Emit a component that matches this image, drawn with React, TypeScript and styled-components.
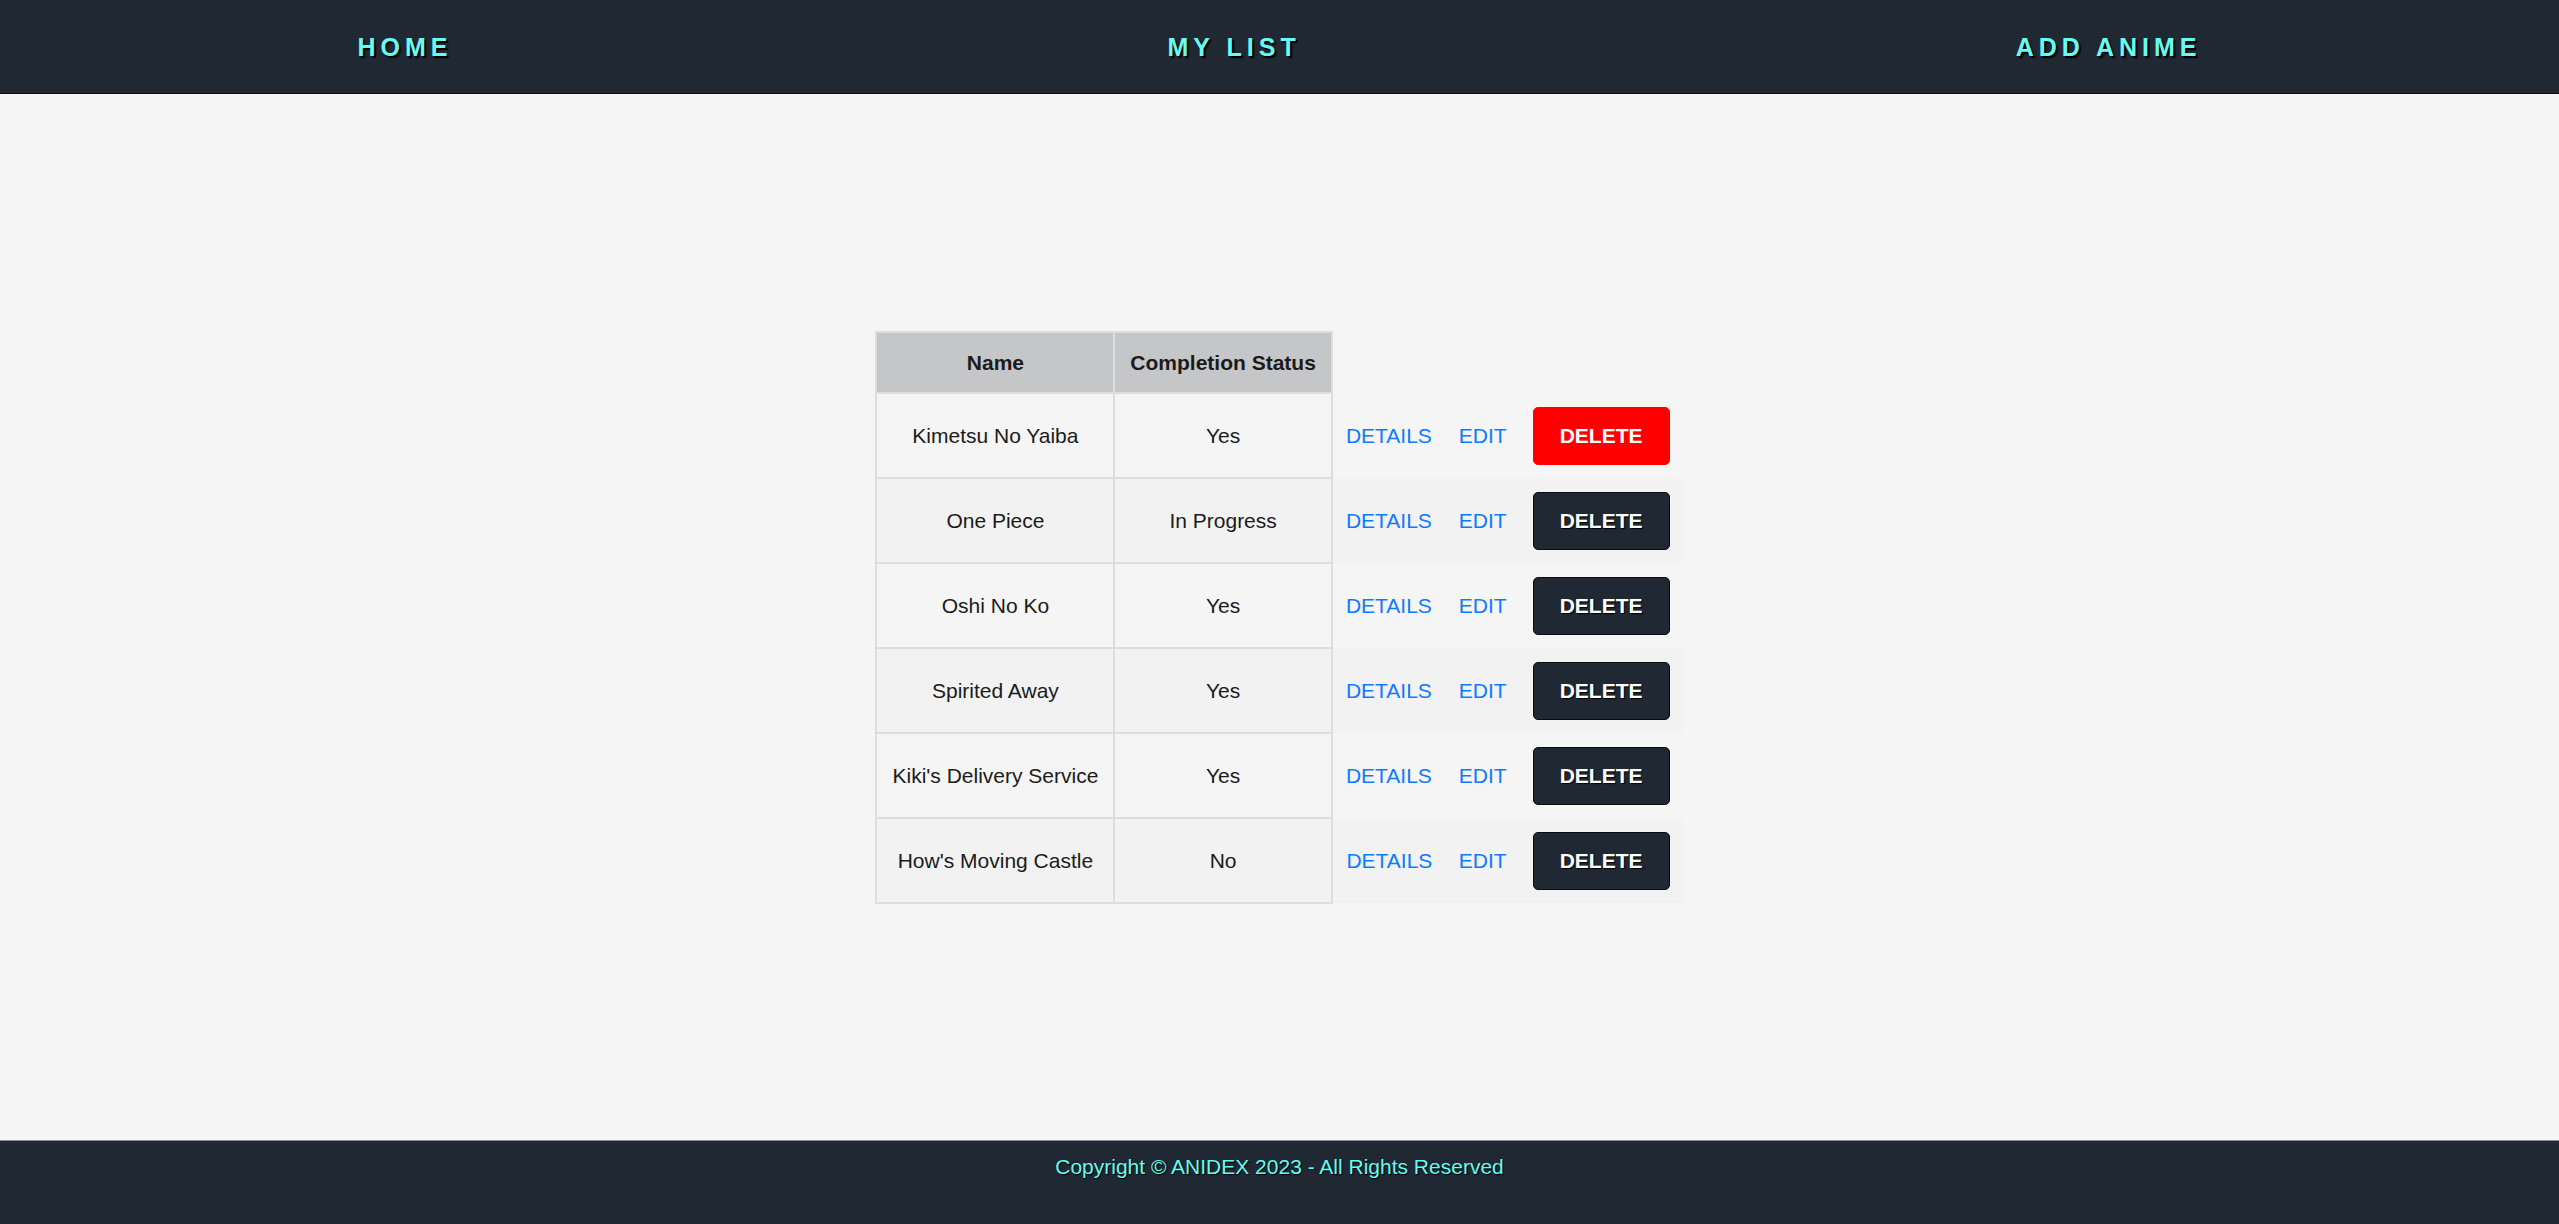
import React from "react";
import styled, { createGlobalStyle } from "styled-components";

const GlobalStyle = createGlobalStyle`
  html, body {
    margin: 0;
    padding: 0;
    height: 100%;
  }
  body {
    font-family: "Liberation Sans", Arial, Helvetica, sans-serif;
    background: #f5f5f5;
  }
  #root {
    min-height: 100vh;
  }
`;

const Page = styled.div`
  min-height: 100vh;
  display: flex;
  flex-direction: column;
  background: #f5f5f5;
`;

const Header = styled.header`
  height: 93px;
  background: #1f2833;
  border-bottom: 1px solid #0b0c10;
  display: flex;
  align-items: center;
  justify-content: space-around;
`;

const NavLink = styled.a`
  font-size: 25px;
  font-weight: 700;
  letter-spacing: 5px;
  color: #66fcf1;
  text-decoration: none;
  text-shadow: 2px 2px 1px #000;
  line-height: 28px;
  cursor: pointer;
`;

const Main = styled.main`
  flex: 1;
  display: flex;
  align-items: center;
  justify-content: center;
`;

const Table = styled.table`
  border-collapse: collapse;
  font-size: 21px;
  line-height: 24px;
  color: #1b1b1b;
`;

const HeadCell = styled.th`
  background: #c5c6c7;
  border: 2px solid #dddddd;
  padding: 18px 15px 17px;
  font-weight: 700;
  text-align: center;
  white-space: nowrap;
`;

const Row = styled.tr<{ $even: boolean }>`
  background: ${(p) => (p.$even ? "#f2f2f2" : "#f5f5f5")};
`;

const DataCell = styled.td`
  border: 2px solid #dddddd;
  padding: 14px 15px 13px;
  text-align: center;
  white-space: nowrap;
`;

const ActionCell = styled.td`
  padding: 14px 13px 13px;
  text-align: center;
  white-space: nowrap;
`;

const TextLink = styled.a`
  color: #0d7bff;
  text-decoration: none;
  font-size: 21px;
  cursor: pointer;
`;

const DeleteButton = styled.button<{ $active: boolean }>`
  font-family: "Liberation Sans", Arial, Helvetica, sans-serif;
  font-size: 21px;
  line-height: 24px;
  font-weight: 700;
  padding: 16px 26px;
  border-radius: 5px;
  border: 1px solid ${(p) => (p.$active ? "#ff0000" : "#0b0c10")};
  background: ${(p) => (p.$active ? "#ff0000" : "#1f2833")};
  color: #ffffff;
  text-shadow: ${(p) => (p.$active ? "none" : "1px 1px 1px #000")};
  cursor: pointer;
  display: inline-block;
  vertical-align: middle;
`;

const Footer = styled.footer`
  height: 69px;
  background: #1f2833;
  border-top: 1px solid #8a8d90;
  padding-top: 14px;
  text-align: center;
`;

const FooterText = styled.p`
  margin: 0;
  font-size: 21px;
  line-height: 24px;
  color: #66fcf1;
  text-shadow: 1px 1px 1px #000;
`;

const animes = [
  { name: "Kimetsu No Yaiba", status: "Yes" },
  { name: "One Piece", status: "In Progress" },
  { name: "Oshi No Ko", status: "Yes" },
  { name: "Spirited Away", status: "Yes" },
  { name: "Kiki's Delivery Service", status: "Yes" },
  { name: "How's Moving Castle", status: "No" },
];

export default function App() {
  return (
    <>
      <GlobalStyle />
      <Page>
        <Header>
          <NavLink>HOME</NavLink>
          <NavLink>MY LIST</NavLink>
          <NavLink>ADD ANIME</NavLink>
        </Header>
        <Main>
          <Table>
            <thead>
              <tr>
                <HeadCell>Name</HeadCell>
                <HeadCell>Completion Status</HeadCell>
              </tr>
            </thead>
            <tbody>
              {animes.map((a, i) => (
                <Row key={a.name} $even={i % 2 === 1}>
                  <DataCell>{a.name}</DataCell>
                  <DataCell>{a.status}</DataCell>
                  <ActionCell>
                    <TextLink>DETAILS</TextLink>
                  </ActionCell>
                  <ActionCell>
                    <TextLink>EDIT</TextLink>
                  </ActionCell>
                  <ActionCell>
                    <DeleteButton $active={i === 0}>DELETE</DeleteButton>
                  </ActionCell>
                </Row>
              ))}
            </tbody>
          </Table>
        </Main>
        <Footer>
          <FooterText>Copyright © ANIDEX 2023 - All Rights Reserved</FooterText>
        </Footer>
      </Page>
    </>
  );
}
